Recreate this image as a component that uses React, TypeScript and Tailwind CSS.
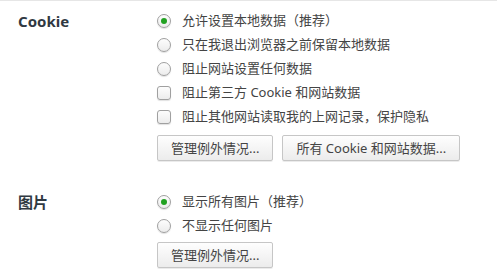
import React from 'react';

function Radio({ checked, label }: { checked?: boolean; label: string }) {
  return (
    <div className="flex h-6 items-center">
      <span className="flex h-[14px] w-[14px] shrink-0 items-center justify-center rounded-full border border-[#a0a0a0] bg-gradient-to-b from-[#fdfdfd] to-[#ececec] shadow-[0_1px_1px_rgba(0,0,0,0.12)]">
        {checked && <span className="h-[6px] w-[6px] rounded-full bg-[#21a121]" />}
      </span>
      <span className="ml-[11px] text-[13px] text-[#444]">{label}</span>
    </div>
  );
}

function Checkbox({ label }: { label: string }) {
  return (
    <div className="flex h-6 items-center">
      <span className="h-[14px] w-[14px] shrink-0 rounded-[3px] border border-[#a0a0a0] bg-gradient-to-b from-[#fdfdfd] to-[#ececec] shadow-[0_1px_1px_rgba(0,0,0,0.12)]" />
      <span className="ml-[11px] text-[13px] text-[#444]">{label}</span>
    </div>
  );
}

function Button({ children }: { children: React.ReactNode }) {
  return (
    <button className="h-[26px] rounded-[2px] border border-[#c6c6c6] bg-gradient-to-b from-[#fefefe] to-[#ececec] px-[13px] text-[13px] leading-none text-[#444] shadow-[0_1px_0_rgba(0,0,0,0.08)]">
      {children}
    </button>
  );
}

export default function App() {
  return (
    <div
      className="h-[269px] w-[497px] overflow-hidden border-t border-[#e6e6e6] bg-white"
      style={{ fontFamily: '"Noto Sans", "Noto Sans CJK SC", sans-serif' }}
    >
      {/* Cookie */}
      <div className="flex pt-2">
        <div className="w-[157px] shrink-0 pl-[18px]">
          <div className="flex h-6 items-center text-[15px] font-bold text-[#303942]">Cookie</div>
        </div>
        <div className="flex flex-col">
          <Radio checked label="允许设置本地数据（推荐）" />
          <Radio label="只在我退出浏览器之前保留本地数据" />
          <Radio label="阻止网站设置任何数据" />
          <Checkbox label="阻止第三方 Cookie 和网站数据" />
          <Checkbox label="阻止其他网站读取我的上网记录，保护隐私" />
          <div className="mt-[6px] flex gap-[9px]">
            <Button>管理例外情况...</Button>
            <Button>所有 Cookie 和网站数据...</Button>
          </div>
        </div>
      </div>

      {/* 图片 */}
      <div className="mt-[29px] flex">
        <div className="w-[157px] shrink-0 pl-[18px]">
          <div className="flex h-6 items-center text-[15px] font-bold text-[#303942]">图片</div>
        </div>
        <div className="flex flex-col">
          <Radio checked label="显示所有图片（推荐）" />
          <Radio label="不显示任何图片" />
          <div className="mt-[4px] flex">
            <Button>管理例外情况...</Button>
          </div>
        </div>
      </div>
    </div>
  );
}
